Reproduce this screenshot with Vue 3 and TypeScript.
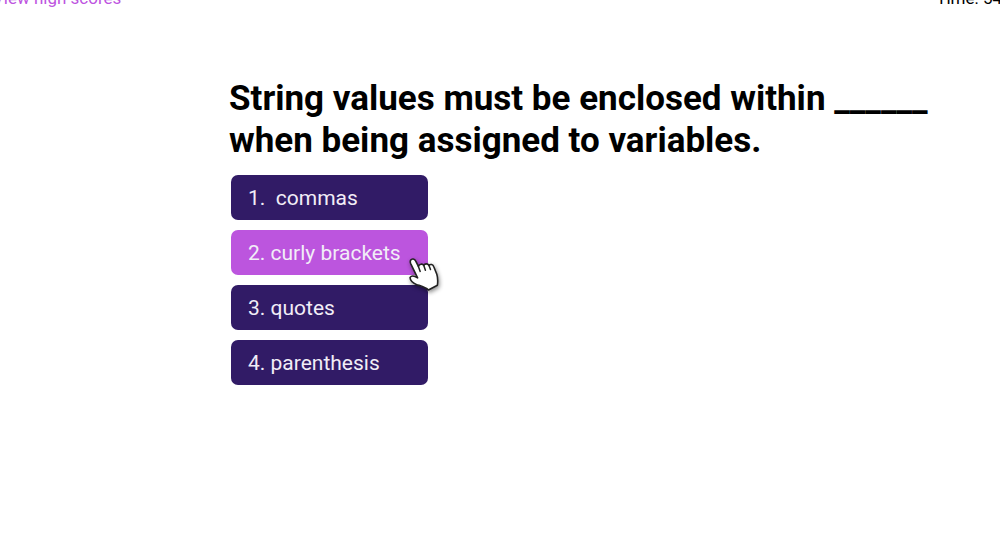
<script setup lang="ts">
import { ref } from 'vue'

interface Answer {
  id: number
  label: string
}

const answers: Answer[] = [
  { id: 1, label: '1.\u00a0 commas' },
  { id: 2, label: '2. curly brackets' },
  { id: 3, label: '3. quotes' },
  { id: 4, label: '4. parenthesis' },
]

const active = ref(2)
const secondsLeft = ref(54)
</script>

<template>
  <div class="page">
    <header class="top">
      <a class="scores" href="#scores">View high scores</a>
      <span class="time">Time: {{ secondsLeft }}</span>
    </header>
    <main class="quiz">
      <h1>String values must be enclosed within ______ when being assigned to variables.</h1>
      <ol class="answers">
        <li v-for="answer in answers" :key="answer.id">
          <button
            type="button"
            :class="{ active: answer.id === active }"
            @click="active = answer.id"
          >
            {{ answer.label }}
          </button>
          <svg v-if="answer.id === active" class="pointer" viewBox="0 0 36 40" aria-hidden="true">
            <path
              d="M3.6 5.2C4.8 3.3 7.6 3.6 8.6 5.8L11.4 11.4C12.2 8.8 15.6 8.4 16.8 10.4C17.8 8.4 20.8 8.4 21.9 10.3C23.5 8.8 26 9.4 26.8 11.7L29.8 19.2C31 23 30.9 26.5 30.4 30.2L21.4 35C18.5 32 13.8 31 9.3 29.4C6 28.2 2.8 25.2 3.1 22.4C4.7 20 8 21.2 10.6 22.9L3.7 8.6C3.2 7.4 3.1 6.2 3.6 5.2Z"
              fill="#fff"
              stroke="#222"
              stroke-width="1.6"
              stroke-linejoin="round"
            />
            <path
              d="M11.4 11.4L13.2 16.4M16.8 10.4L18.4 15.2M21.9 10.3L23.5 14.6"
              fill="none"
              stroke="#222"
              stroke-width="1.5"
              stroke-linecap="round"
            />
          </svg>
        </li>
      </ol>
    </main>
  </div>
</template>

<style>
body {
  margin: 0;
  background: #fff;
}
</style>

<style scoped>
.page {
  min-height: 100vh;
  overflow: hidden;
  font-family: Roboto, "Liberation Sans", sans-serif;
  color: #000;
}

.top {
  display: flex;
  justify-content: space-between;
  margin: -12px -2px 0 -7px;
  font-size: 17px;
  line-height: 20px;
  white-space: nowrap;
}

.scores {
  color: #bd54df;
  text-decoration: none;
}

.quiz {
  margin: 70px 60px 0 229px;
}

h1 {
  margin: 0;
  font-size: 35px;
  font-weight: 700;
  line-height: 42px;
}

.answers {
  display: flex;
  flex-direction: column;
  align-items: flex-start;
  gap: 10px;
  margin: 13px 0 0 2px;
  padding: 0;
  list-style: none;
}

li {
  position: relative;
}

button {
  display: block;
  min-width: 197px;
  height: 45px;
  padding: 0 17px;
  border: 0;
  border-radius: 7px;
  background: #311b66;
  color: #f1edf7;
  font: 400 21px/24px Roboto, "Liberation Sans", sans-serif;
  text-align: left;
  white-space: pre;
  cursor: pointer;
}

button.active {
  background: #bc55de;
}

.pointer {
  position: absolute;
  top: 25px;
  right: -15px;
  z-index: 1;
  width: 36px;
  height: 40px;
  filter: drop-shadow(1px 2px 2px rgb(0 0 0 / 45%));
  pointer-events: none;
}
</style>
